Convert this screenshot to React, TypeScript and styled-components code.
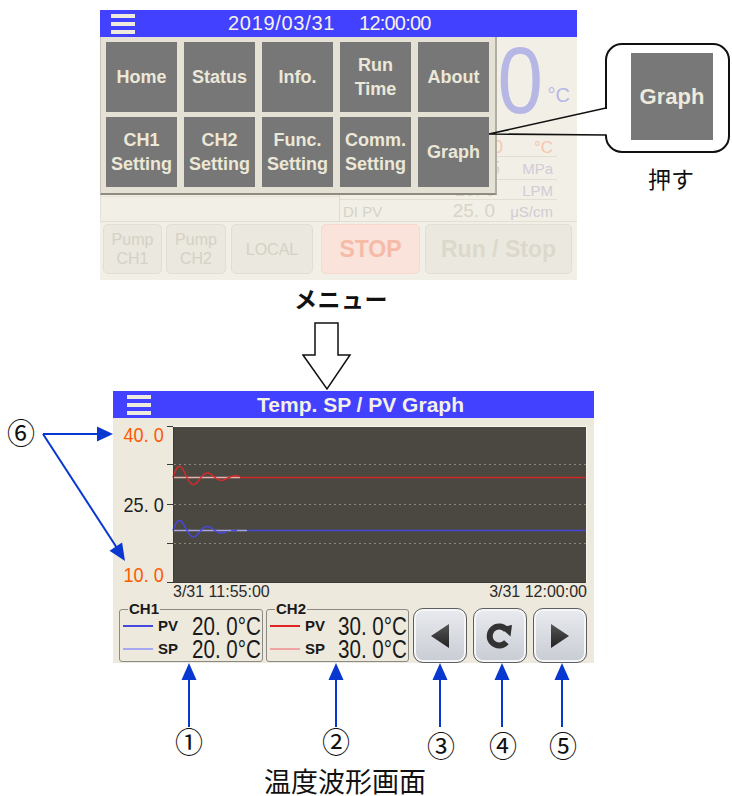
import React from "react";
import styled, { createGlobalStyle } from "styled-components";

const Global = createGlobalStyle`
  html, body { margin: 0; padding: 0; background: #fff; }
  body { font-family: "Liberation Sans", Arial, sans-serif; }
  * { box-sizing: border-box; }
`;

const JP = `"Noto Sans CJK JP", "Noto Sans", sans-serif`;

const Page = styled.div`
  position: relative;
  width: 732px;
  height: 796px;
  overflow: hidden;
  background: #fff;
  display: flex;
  flex-direction: column;
`;

const TopRow = styled.div`
  display: flex;
  align-items: flex-start;
  margin-top: 10px;
  padding-left: 100px;
  height: 270px;
  flex-shrink: 0;
`;

const ScreenA = styled.div`
  position: relative;
  width: 477px;
  height: 270px;
  background: #f2efe6;
  display: flex;
  flex-direction: column;
  overflow: hidden;
  flex-shrink: 0;
`;

const Header = styled.div<{ $pl: number }>`
  height: 27px;
  flex-shrink: 0;
  background: #4141ff;
  display: flex;
  align-items: center;
  padding-left: ${(p) => p.$pl}px;
  color: #f6f2e8;
`;

const HeaderB = styled.div`
  height: 27px;
  flex-shrink: 0;
  background: #4141ff;
  display: grid;
  grid-template-columns: 1fr auto 1fr;
  align-items: center;
  padding-left: 14px;
  color: #f4f0e4;
`;

const Burger = styled.span`
  display: flex;
  flex-direction: column;
  gap: 4px;
  width: 24px;
`;

const Bar = styled.span`
  display: block;
  height: 4px;
  background: #eeeadc;
`;

const DateText = styled.span`
  margin-left: 93px;
  font-size: 20px;
  letter-spacing: 0.7px;
`;

const TimeText = styled.span`
  margin-left: 24px;
  font-size: 20px;
  letter-spacing: -0.8px;
`;

const HomeMain = styled.div`
  height: 185px;
  flex-shrink: 0;
  display: grid;
  grid-template-columns: 239px 1fr;
  border-bottom: 1px solid #e2ded3;
`;

const HomeLeft = styled.div`
  display: flex;
  flex-direction: column;
  justify-content: flex-end;
  border-left: 1px solid #e4e0d6;
`;

const FaintRow = styled.div`
  height: 22px;
  display: flex;
  justify-content: flex-end;
  align-items: center;
  gap: 32px;
  padding: 4px 21px 0 0;
  border-bottom: 1px solid #e6e2d8;
  color: #dcd8cc;
  font-size: 16px;
`;

const EmptyRow = styled.div`
  height: 24px;
`;

const HomeRight = styled.div`
  border-left: 1px solid #dedacf;
  display: flex;
  flex-direction: column;
`;

const BigRow = styled.div`
  height: 100px;
  display: flex;
  justify-content: flex-end;
  align-items: flex-start;
  padding-right: 7px;
  color: #b7b7e6;
`;

const BigNum = styled.span`
  display: inline-block;
  font-size: 95px;
  line-height: 95px;
  margin-top: -4px;
  transform: scaleX(0.86);
  transform-origin: right center;
`;

const BigUnit = styled.span`
  font-size: 20px;
  margin-top: 47px;
  margin-left: 5px;
`;

const HRow = styled.div<{ $h: number; $line?: boolean }>`
  height: ${(p) => p.$h}px;
  display: grid;
  grid-template-columns: 1fr auto 52px;
  column-gap: 6px;
  align-items: center;
  padding: 0 4px 0 3px;
  margin-right: 20px;
  border-bottom: ${(p) => (p.$line ? "1px solid #e2ded4" : "none")};
`;

const HLabel = styled.span`
  color: #d6d2c6;
  font-size: 15px;
`;

const HVal = styled.span<{ $orange?: boolean; $fs: number; $shift?: number }>`
  color: ${(p) => (p.$orange ? "#f7c6b0" : "#d8d4c8")};
  font-size: ${(p) => p.$fs}px;
  text-align: right;
  margin-right: ${(p) => -(p.$shift ?? 0)}px;
`;

const HUnit = styled.span<{ $orange?: boolean }>`
  color: ${(p) => (p.$orange ? "#f7c6b0" : "#d0ccd6")};
  font-size: ${(p) => (p.$orange ? 17 : 15)}px;
  text-align: right;
`;

const HomeBtns = styled.div`
  display: flex;
  align-items: flex-start;
  padding: 2px 0 0 3px;
  gap: 4px;
`;

const HBtn = styled.div<{ $w: number; $ml?: number; $stop?: boolean; $big?: boolean }>`
  width: ${(p) => p.$w}px;
  height: 50px;
  margin-left: ${(p) => p.$ml ?? 0}px;
  border-radius: 5px;
  background: ${(p) => (p.$stop ? "#f9e3da" : "#ebe8df")};
  border: 1px solid ${(p) => (p.$stop ? "#f6d8cd" : "#e2ded3")};
  color: ${(p) => (p.$stop ? "#f6bba8" : p.$big ? "#dcd8cc" : "#d5d1c5")};
  font-size: ${(p) => (p.$big ? 23 : 16)}px;
  font-weight: ${(p) => (p.$big ? 700 : 400)};
  line-height: 19px;
  display: flex;
  align-items: center;
  justify-content: center;
  text-align: center;
  white-space: pre-line;
`;

const MenuPanel = styled.div`
  position: absolute;
  top: 27px;
  left: 0;
  width: 397px;
  height: 158px;
  background: #e5e1d5;
  border-left: 1px solid #c6c2b6;
  border-right: 2px solid #b2aea3;
  border-bottom: 2px solid #8f8b81;
  padding: 5px 0 0 5px;
  display: grid;
  grid-template-columns: repeat(5, 71px);
  grid-template-rows: repeat(2, 70px);
  column-gap: 7px;
  row-gap: 5px;
`;

const MenuBtn = styled.div`
  background: #777777;
  color: #ece8d8;
  font-weight: 700;
  font-size: 18px;
  line-height: 24px;
  display: flex;
  align-items: center;
  justify-content: center;
  text-align: center;
  white-space: pre-line;
`;

const CalloutCol = styled.div`
  margin-left: 28px;
  padding-top: 33px;
  display: flex;
  flex-direction: column;
  width: 125px;
`;

const CalloutBox = styled.div`
  width: 125px;
  height: 110px;
  border: 2px solid #111;
  border-radius: 17px;
  background: #fff;
  padding: 8px 0 0 24px;
`;

const GraphKey = styled.div`
  width: 82px;
  height: 87px;
  background: #787878;
  color: #eeeadc;
  font-weight: 700;
  font-size: 22px;
  display: flex;
  align-items: center;
  justify-content: center;
`;

const PushText = styled.div`
  margin-top: 14px;
  padding-left: 7px;
  text-align: center;
  font-family: ${JP};
  font-size: 23px;
  line-height: 23px;
  color: #111;
`;

const MenuLabel = styled.div`
  margin-top: 7px;
  padding-left: 294px;
  font-family: ${JP};
  font-weight: 700;
  font-size: 23px;
  line-height: 22px;
  letter-spacing: 0.5px;
  color: #111;
`;

const DownArrow = styled.svg`
  display: block;
  margin-top: 13px;
  margin-left: 302px;
  flex-shrink: 0;
`;

const ScreenB = styled.div`
  margin-left: 113px;
  width: 481px;
  height: 272px;
  flex-shrink: 0;
  background: #ede9dd;
  display: flex;
  flex-direction: column;
`;

const Title = styled.span`
  font-weight: 700;
  font-size: 21px;
  white-space: nowrap;
`;

const BodyB = styled.div`
  padding: 8px 6px 0 0;
  display: flex;
  flex-direction: column;
`;

const ChartRow = styled.div`
  display: flex;
  height: 158px;
`;

const YAxis = styled.div`
  width: 54px;
  display: flex;
  flex-direction: column;
  justify-content: space-between;
  align-items: flex-end;
  padding-right: 3px;
`;

const YLabel = styled.div<{ $c: string }>`
  font-size: 21px;
  line-height: 18px;
  color: ${(p) => p.$c};
`;

const Narrow = styled.span<{ $sx: number; $sy?: number; $o?: string }>`
  display: inline-block;
  white-space: pre;
  transform: scale(${(p) => p.$sx}, ${(p) => p.$sy ?? 1});
  transform-origin: ${(p) => p.$o ?? "right"} center;
`;

const XLabels = styled.div`
  margin-left: 60px;
  width: 414px;
  height: 16px;
  display: flex;
  justify-content: space-between;
  font-size: 16px;
  line-height: 16px;
  color: #2a2a2a;
`;

const InfoRow = styled.div`
  margin-top: 3px;
  padding-left: 6px;
  display: flex;
  align-items: flex-start;
`;

const ChBox = styled.fieldset<{ $w: number; $ml?: number }>`
  width: ${(p) => p.$w}px;
  height: 59px;
  margin: 0 0 0 ${(p) => p.$ml ?? 0}px;
  padding: 0 1px 0 3px;
  min-width: 0;
  border: 1px solid #8c8a84;
  border-radius: 3px;
`;

const ChTitle = styled.legend`
  margin-left: 5px;
  padding: 0 1px;
  font-weight: 700;
  font-size: 15px;
  line-height: 12px;
  color: #1a1a1a;
`;

const ChRow = styled.div`
  height: 23px;
  display: flex;
  align-items: center;
`;

const Swatch = styled.span<{ $c: string }>`
  width: 30px;
  height: 2px;
  background: ${(p) => p.$c};
  margin-right: 5px;
  margin-top: -2px;
`;

const Key = styled.span`
  font-weight: 700;
  font-size: 15px;
  line-height: 17px;
  color: #1a1a1a;
  margin-top: -3px;
`;

const Val = styled.span`
  margin-left: auto;
  font-size: 20px;
  line-height: 23px;
  color: #1a1a1a;
`;

const NavBtn = styled.div<{ $ml: number }>`
  margin: 5px 0 0 ${(p) => p.$ml}px;
  width: 54px;
  height: 55px;
  border: 1.5px solid #5e5e5e;
  border-radius: 10px;
  background: linear-gradient(#e9ebef, #c8ccd3);
  box-shadow: inset 0 0 0 2px #f5f6f8;
  display: flex;
  align-items: center;
  justify-content: center;
`;

const NumRow = styled.div`
  margin-top: 64px;
  height: 30px;
  display: flex;
  flex-shrink: 0;
`;

const Num = styled.span<{ $ml: number; $dy?: number }>`
  width: 28px;
  margin-left: ${(p) => p.$ml}px;
  margin-top: ${(p) => p.$dy ?? 0}px;
  font-family: ${JP};
  font-size: 28px;
  line-height: 28px;
  color: #111;
  text-align: center;
`;

const Caption = styled.div`
  margin-top: 12px;
  padding-left: 264px;
  font-family: ${JP};
  font-size: 27px;
  line-height: 24px;
  color: #111;
`;

const Overlay = styled.svg`
  position: absolute;
  top: 0;
  left: 0;
  pointer-events: none;
`;

const wave = (cy: number, amp: number, len: number) => {
  const pts: string[] = [];
  for (let t = 0; t <= len; t += 1) {
    const a = amp * Math.exp(-t / 31);
    const y = cy - a * Math.sin((2 * Math.PI * t) / 28);
    pts.push(`${(t + 6).toFixed(1)},${y.toFixed(1)}`);
  }
  return pts.join(" ");
};

const menu = ["Home", "Status", "Info.", "Run\nTime", "About", "CH1\nSetting", "CH2\nSetting", "Func.\nSetting", "Comm.\nSetting", "Graph"];

const BLUE = "#0838d0";
const arrowXs = [189, 336, 440, 502, 562];

const ValueText = ({ v }: { v: string }) => (
  <Val>
    <Narrow $sx={1.03} $sy={1.25}>
      {v}
    </Narrow>
  </Val>
);

export default function App() {
  return (
    <>
      <Global />
      <Page>
        <TopRow>
          <ScreenA>
            <Header $pl={11}>
              <Burger>
                <Bar />
                <Bar />
                <Bar />
              </Burger>
              <DateText>2019/03/31</DateText>
              <TimeText>12:00:00</TimeText>
            </Header>
            <HomeMain>
              <HomeLeft>
                <FaintRow>
                  <span>10. 0</span>
                  <span>LPM</span>
                </FaintRow>
                <EmptyRow />
              </HomeLeft>
              <HomeRight>
                <BigRow>
                  <BigNum>0</BigNum>
                  <BigUnit>°C</BigUnit>
                </BigRow>
                <HRow $h={20} $line>
                  <span />
                  <HVal $orange $fs={18} $shift={8}>0</HVal>
                  <HUnit $orange>°C</HUnit>
                </HRow>
                <HRow $h={23} $line>
                  <span />
                  <HVal $fs={18} $shift={5}>5</HVal>
                  <HUnit>MPa</HUnit>
                </HRow>
                <HRow $h={20} $line>
                  <span />
                  <HVal $fs={18}>10. 0</HVal>
                  <HUnit>LPM</HUnit>
                </HRow>
                <HRow $h={21}>
                  <HLabel>DI PV</HLabel>
                  <HVal $fs={19}>25. 0</HVal>
                  <HUnit>μS/cm</HUnit>
                </HRow>
              </HomeRight>
            </HomeMain>
            <HomeBtns>
              <HBtn $w={59}>{"Pump\nCH1"}</HBtn>
              <HBtn $w={60}>{"Pump\nCH2"}</HBtn>
              <HBtn $w={82} $ml={1}>LOCAL</HBtn>
              <HBtn $w={99} $ml={4} $stop $big>STOP</HBtn>
              <HBtn $w={147} $ml={1} $big>Run / Stop</HBtn>
            </HomeBtns>
            <MenuPanel>
              {menu.map((m) => (
                <MenuBtn key={m}>{m}</MenuBtn>
              ))}
            </MenuPanel>
          </ScreenA>
          <CalloutCol>
            <CalloutBox>
              <GraphKey>Graph</GraphKey>
            </CalloutBox>
            <PushText>押す</PushText>
          </CalloutCol>
        </TopRow>

        <MenuLabel>メニュー</MenuLabel>
        <DownArrow width="50" height="69" viewBox="0 0 50 69">
          <polygon points="13,1 36,1 36,33 48,33 25,67 1,33 13,33" fill="#fff" stroke="#111" strokeWidth="1.5" strokeLinejoin="miter" />
        </DownArrow>

        <ScreenB>
          <HeaderB>
            <Burger>
              <Bar />
              <Bar />
              <Bar />
            </Burger>
            <Title>Temp. SP / PV Graph</Title>
            <span />
          </HeaderB>
          <BodyB>
            <ChartRow>
              <YAxis>
                <YLabel $c="#ff5a00">
                  <Narrow $sx={0.86}>40. 0</Narrow>
                </YLabel>
                <YLabel $c="#1e1e1e">
                  <Narrow $sx={0.86}>25. 0</Narrow>
                </YLabel>
                <YLabel $c="#ff5a00">
                  <Narrow $sx={0.86}>10. 0</Narrow>
                </YLabel>
              </YAxis>
              <svg width="421" height="158" viewBox="0 0 421 158">
                <rect x="6" y="0" width="414" height="157" fill="#4a4840" />
                {[0.5, 38.5, 78.5, 117.5, 156.5].map((y) => (
                  <line key={y} x1="0" x2="6" y1={y} y2={y} stroke="#3a3a3a" strokeWidth="1" />
                ))}
                {[38.5, 78.5, 117.5].map((y) => (
                  <line key={y} x1="7" x2="419" y1={y} y2={y} stroke="#8c8a80" strokeWidth="1" strokeDasharray="2 3" />
                ))}
                <line x1="6" x2="73" y1="51.5" y2="51.5" stroke="#eab0b0" strokeWidth="1.5" />
                <polyline points={wave(51.5, 13.8, 67)} fill="none" stroke="#d62a2a" strokeWidth="1.5" />
                <line x1="73" x2="420" y1="51.5" y2="51.5" stroke="#d02828" strokeWidth="1.5" />
                <line x1="6" x2="80" y1="104.5" y2="104.5" stroke="#a4a4e6" strokeWidth="1.5" />
                <polyline points={wave(104.5, 12.5, 54)} fill="none" stroke="#4848dc" strokeWidth="1.5" />
                <line x1="64" x2="70" y1="104.5" y2="104.5" stroke="#4848dc" strokeWidth="1.5" />
                <line x1="80" x2="420" y1="104.5" y2="104.5" stroke="#4646d2" strokeWidth="1.5" />
                <line x1="6.5" x2="6.5" y1="0" y2="157" stroke="#3c3b35" strokeWidth="1" />
                <line x1="6" x2="420" y1="156.5" y2="156.5" stroke="#3c3b35" strokeWidth="1" />
                <line x1="6" x2="420" y1="0.5" y2="0.5" stroke="#f7f5ee" strokeWidth="1" />
                <line x1="419.5" x2="419.5" y1="0" y2="157" stroke="#f7f5ee" strokeWidth="1" />
              </svg>
            </ChartRow>
            <XLabels>
              <span>3/31 11:55:00</span>
              <span>3/31 12:00:00</span>
            </XLabels>
            <InfoRow>
              <ChBox $w={144}>
                <ChTitle>CH1</ChTitle>
                <ChRow>
                  <Swatch $c="#4848e0" />
                  <Key>PV</Key>
                  <ValueText v="20. 0°C" />
                </ChRow>
                <ChRow>
                  <Swatch $c="#a8a8f0" />
                  <Key>SP</Key>
                  <ValueText v="20. 0°C" />
                </ChRow>
              </ChBox>
              <ChBox $w={143} $ml={3}>
                <ChTitle>CH2</ChTitle>
                <ChRow>
                  <Swatch $c="#e02424" />
                  <Key>PV</Key>
                  <ValueText v="30. 0°C" />
                </ChRow>
                <ChRow>
                  <Swatch $c="#f0a4a4" />
                  <Key>SP</Key>
                  <ValueText v="30. 0°C" />
                </ChRow>
              </ChBox>
              <NavBtn $ml={4}>
                <svg width="20" height="26" viewBox="0 0 20 26">
                  <defs>
                    <linearGradient id="triL" x1="0" y1="0" x2="0" y2="1">
                      <stop offset="0" stopColor="#555" />
                      <stop offset="1" stopColor="#222" />
                    </linearGradient>
                  </defs>
                  <polygon points="1,13 19,1 19,25" fill="url(#triL)" />
                </svg>
              </NavBtn>
              <NavBtn $ml={6}>
                <svg width="30" height="30" viewBox="0 0 30 30">
                  <path d="M21.4 21.2 A9.5 9.5 0 1 1 21.4 8.8" fill="none" stroke="#333" strokeWidth="6" />
                  <polygon points="15.5,6.5 27,4 25.5,15.5" fill="#333" />
                </svg>
              </NavBtn>
              <NavBtn $ml={6}>
                <svg width="20" height="26" viewBox="0 0 20 26">
                  <defs>
                    <linearGradient id="triR" x1="0" y1="0" x2="0" y2="1">
                      <stop offset="0" stopColor="#555" />
                      <stop offset="1" stopColor="#222" />
                    </linearGradient>
                  </defs>
                  <polygon points="19,13 1,1 1,25" fill="url(#triR)" />
                </svg>
              </NavBtn>
            </InfoRow>
          </BodyB>
        </ScreenB>

        <NumRow>
          <Num $ml={175}>①</Num>
          <Num $ml={119}>②</Num>
          <Num $ml={77} $dy={4}>③</Num>
          <Num $ml={34} $dy={4}>④</Num>
          <Num $ml={32} $dy={4}>⑤</Num>
        </NumRow>
        <Caption>温度波形画面</Caption>

        <Overlay width="732" height="796" viewBox="0 0 732 796">
          <rect x="603.5" y="109" width="5" height="25.5" fill="#fff" />
          <polyline points="606,108 489,134 606,135" fill="none" stroke="#111" strokeWidth="1.6" />
          <line x1="43" y1="434" x2="99" y2="434" stroke={BLUE} strokeWidth="2" />
          <polygon points="113,434 97,426.5 97,441.5" fill={BLUE} />
          <line x1="43" y1="434" x2="117" y2="548" stroke={BLUE} strokeWidth="2" />
          <polygon points="125,561 109.5,550.8 122.1,542.6" fill={BLUE} />
          {arrowXs.map((x) => (
            <g key={x}>
              <line x1={x} x2={x} y1="727" y2="678" stroke={BLUE} strokeWidth="2" />
              <polygon points={`${x},663 ${x - 7.5},680 ${x + 7.5},680`} fill={BLUE} />
            </g>
          ))}
          <text x="7" y="444" fontFamily={JP} fontSize="28" fill="#111">⑥</text>
        </Overlay>
      </Page>
    </>
  );
}
